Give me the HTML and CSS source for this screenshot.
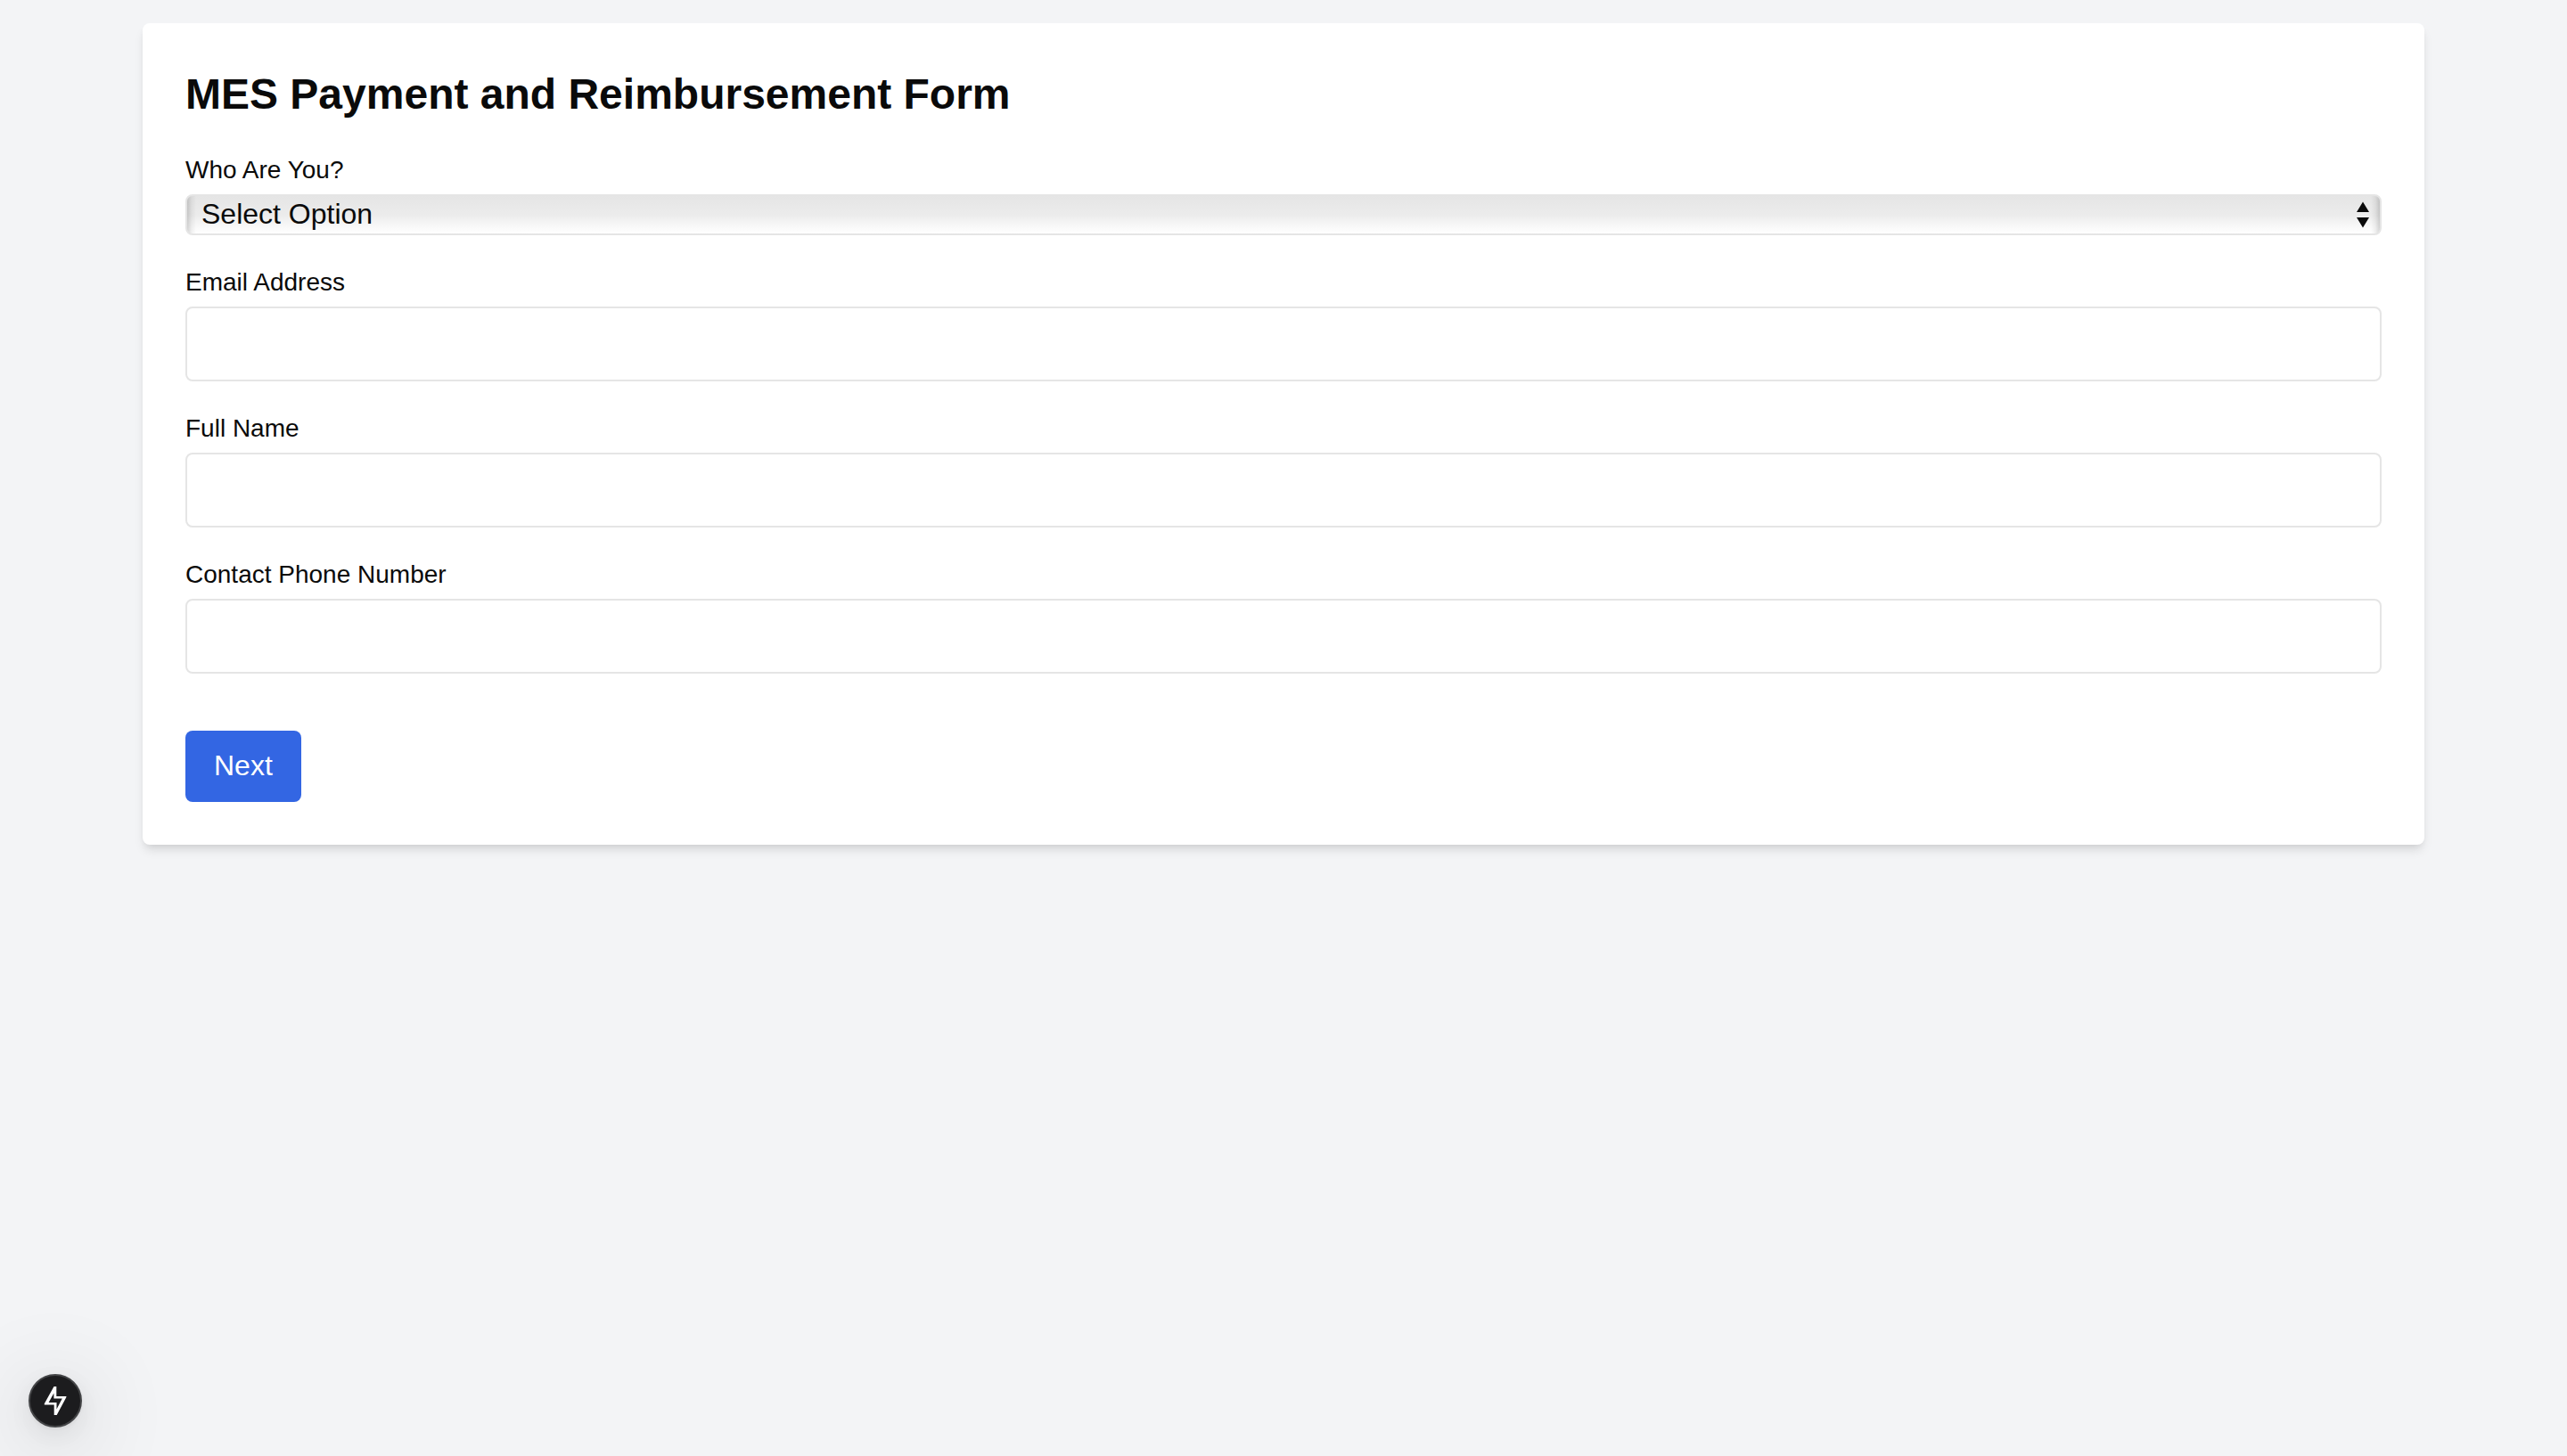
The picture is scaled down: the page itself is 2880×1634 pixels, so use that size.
FILE: index.html
```html
<!DOCTYPE html>
<html lang="en">
<head>
  <meta charset="utf-8">
  <meta name="viewport" content="width=device-width, initial-scale=1">
  <title>MES Payment and Reimbursement Form</title>
  <link rel="stylesheet" href="styles.css">
</head>
<body>
  <main class="page">
    <form class="card">
      <h1 class="title">MES Payment and Reimbursement Form</h1>
      <div class="field">
        <label class="label" for="role">Who Are You?</label>
        <div class="select-wrap">
          <select class="select" id="role">
            <option>Select Option</option>
          </select>
          <svg class="select-arrows" viewBox="0 0 14 30" aria-hidden="true">
            <path d="M7 0.500L14 12H0ZM0 18H14L7 29.500Z" fill="#0a0a0a"/>
          </svg>
        </div>
      </div>
      <div class="field">
        <label class="label" for="email">Email Address</label>
        <input class="input" id="email" type="email">
      </div>
      <div class="field">
        <label class="label" for="name">Full Name</label>
        <input class="input" id="name" type="text">
      </div>
      <div class="field">
        <label class="label" for="phone">Contact Phone Number</label>
        <input class="input" id="phone" type="tel">
      </div>
      <button class="next" type="button">Next</button>
    </form>
  </main>
  <button class="dev-badge" type="button" aria-label="Developer tools">
    <svg class="bolt" viewBox="0 0 28 34" aria-hidden="true">
      <path fill="#fff" fill-rule="evenodd" d="M12.500 1H15.300V11.900H26.400V13L15.700 33H12.700V21.600H1.800V20.300ZM12.400 8.500L6.600 18.900H15.500V26.500L21.800 14.600H12.400Z"/>
    </svg>
  </button>
</body>
</html>
```
FILE: styles.css
```css
* {
  box-sizing: border-box;
}

body {
  margin: 0;
  min-height: 100vh;
  background: #f3f4f6;
  color: #0a0a0a;
  font-family: "Liberation Sans", Arial, Helvetica, sans-serif;
  font-size: 32px;
  line-height: 48px;
}

.page {
  max-width: 2560px;
  margin: 0 auto;
  padding-top: 26px;
}

.card {
  padding: 48px;
  border-radius: 8px;
  background: #fff;
  box-shadow: 0 8px 12px -2px rgba(0, 0, 0, 0.1), 0 4px 8px -4px rgba(0, 0, 0, 0.1);
}

.title {
  margin: 0 0 32px;
  font-size: 48px;
  line-height: 64px;
  font-weight: 700;
}

.field {
  margin-bottom: 32px;
}

.label {
  display: block;
  margin-bottom: 6px;
  font-size: 28px;
  line-height: 42px;
}

.input,
.select {
  display: block;
  width: 100%;
  border: 2px solid #e5e5e5;
  border-radius: 8px;
  font: inherit;
  color: inherit;
}

.input {
  height: 84px;
  padding: 16px;
  background: #fff;
}

.select-wrap {
  position: relative;
}

.select {
  appearance: none;
  height: 46px;
  padding: 0 48px 2px 16px;
  line-height: 36px;
  background:
    linear-gradient(to right, rgba(0, 0, 0, 0.16), rgba(0, 0, 0, 0.05) 5px, transparent 10px, transparent calc(100% - 10px), rgba(0, 0, 0, 0.05) calc(100% - 5px), rgba(0, 0, 0, 0.16)),
    linear-gradient(#e5e5e5, #ececec 52%, #f4f4f4 70%, #fff);
}

.select-arrows {
  position: absolute;
  top: 8px;
  right: 14px;
  width: 14px;
  height: 30px;
  pointer-events: none;
}

.next {
  display: block;
  margin-top: 64px;
  padding: 15px 32px 17px;
  border: 0;
  border-radius: 8px;
  background: #3366e3;
  color: #fff;
  font: inherit;
}

.dev-badge {
  position: fixed;
  left: 32px;
  bottom: 32px;
  display: grid;
  place-items: center;
  width: 60px;
  height: 60px;
  padding: 0;
  border: 2px solid #434446;
  border-radius: 50%;
  background: #1c1c1e;
  box-shadow: 0 2px 4px rgba(0, 0, 0, 0.06), 0 8px 32px rgba(0, 0, 0, 0.08), 0 16px 96px 16px rgba(0, 0, 0, 0.1);
}

.bolt {
  width: 28px;
  height: 34px;
}
```
